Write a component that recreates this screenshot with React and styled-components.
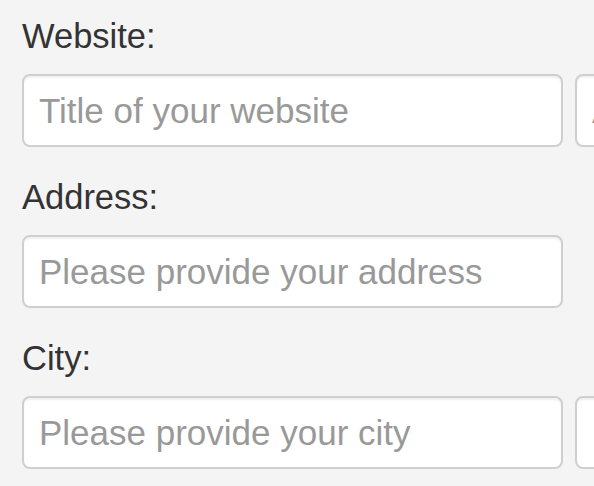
import React from "react";
import styled, { createGlobalStyle } from "styled-components";

const Global = createGlobalStyle`
  html, body { margin: 0; padding: 0; background: #f4f4f4; }
  body { font-family: "Liberation Sans", Arial, sans-serif; overflow: hidden; }
  * { box-sizing: border-box; }
`;

const Form = styled.form`
  padding: 19px 0 0 22px;
  width: 594px;
  overflow: hidden;
`;

const Group = styled.div`
  display: flex;
  flex-direction: column;
  gap: 21px;
  margin-bottom: 33px;
`;

const Label = styled.label`
  display: block;
  font-size: 34.5px;
  line-height: 34px;
  color: #333;
`;

const Row = styled.div`
  display: grid;
  grid-template-columns: 541px 541px;
  column-gap: 12px;
`;

const Input = styled.input`
  display: block;
  width: 100%;
  height: 73px;
  padding: 0 15px;
  font-family: "Liberation Sans", Arial, sans-serif;
  font-size: 35px;
  color: #555;
  background: #fff;
  border: 2px solid #cfcfcf;
  border-radius: 8px;
  box-shadow: inset 0 2px 2px rgba(0, 0, 0, 0.06);
  outline: none;
  &::placeholder { color: #999; }
`;

const fields = [
  { label: "Website:", inputs: ["Title of your website", "Address of your website"] },
  { label: "Address:", inputs: ["Please provide your address"] },
  { label: "City:", inputs: ["Please provide your city", "Postal code"] },
];

export default function App() {
  return (
    <>
      <Global />
      <Form>
        {fields.map((f) => (
          <Group key={f.label}>
            <Label>{f.label}</Label>
            <Row>
              {f.inputs.map((p) => (
                <Input key={p} type="text" placeholder={p} />
              ))}
            </Row>
          </Group>
        ))}
      </Form>
    </>
  );
}
